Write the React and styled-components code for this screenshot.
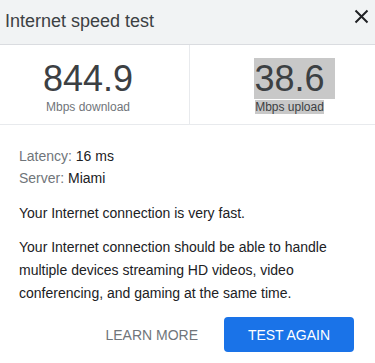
import React from "react";
import styled, { createGlobalStyle } from "styled-components";

const Global = createGlobalStyle`
  html, body { margin: 0; padding: 0; background: #fff; }
  body { font-family: "Liberation Sans", Arial, sans-serif; }
  * { box-sizing: border-box; }
`;

const Card = styled.div`
  width: 375px;
  height: 363px;
  background: #fff;
  display: flex;
  flex-direction: column;
  overflow: hidden;
`;

const Header = styled.div`
  height: 45px;
  background: #f1f3f4;
  border-bottom: 1px solid #dadce0;
  display: flex;
  align-items: center;
  justify-content: space-between;
  padding: 0 6px 1px 5px;
`;

const Title = styled.h1`
  margin: 0;
  font-size: 18px;
  font-weight: 400;
  color: #3c4043;
`;

const CloseButton = styled.button`
  border: 0;
  background: none;
  padding: 0;
  width: 15px;
  height: 15px;
  align-self: flex-start;
  margin-top: 9px;
  cursor: pointer;
  display: flex;
`;

const Stats = styled.div`
  display: grid;
  grid-template-columns: 190px 1fr;
  border-bottom: 1px solid #e8eaed;
  height: 80px;
`;

const Stat = styled.div`
  display: flex;
  flex-direction: column;
  align-items: center;
  padding-top: 13px;
  ${(p) =>
    p.$side === "left"
      ? "padding-right: 13px; border-right: 1px solid #e8eaed;"
      : "padding-left: 14px;"}
`;

const Number = styled.div`
  font-size: 36px;
  line-height: normal;
  color: #3c4043;
`;

const Label = styled.div`
  font-size: 12px;
  line-height: 14px;
  color: #70757a;
`;

const Selected = styled.span`
  background: #c8c8c8;
  color: #3c4043;
  padding-right: ${(p) => p.$trail || 0}px;
  margin-right: -${(p) => p.$trail || 0}px;
`;

const Body = styled.div`
  padding: 20px 19px 0;
  display: flex;
  flex-direction: column;
`;

const Meta = styled.div`
  font-size: 14px;
  line-height: 22px;
  color: #70757a;
`;

const Value = styled.span`
  color: #202124;
`;

const Para = styled.p`
  margin: ${(p) => p.$mt || 0}px 0 0;
  font-size: 14px;
  line-height: 23px;
  color: #202124;
`;

const Actions = styled.div`
  display: flex;
  justify-content: flex-end;
  align-items: center;
  gap: 26px;
  padding: 12px 2px 0 0;
`;

const TextButton = styled.button`
  border: 0;
  background: none;
  padding: 0;
  font-family: inherit;
  font-size: 14px;
  color: #70757a;
  cursor: pointer;
`;

const PrimaryButton = styled.button`
  border: 0;
  background: #1a73e8;
  color: #fff;
  width: 130px;
  height: 35px;
  border-radius: 4px;
  font-family: inherit;
  font-size: 14px;
  cursor: pointer;
`;

export default function App() {
  return (
    <>
      <Global />
      <Card>
        <Header>
          <Title>Internet speed test</Title>
          <CloseButton aria-label="Close">
            <svg width="15" height="15" viewBox="0 0 15 15">
              <path d="M1.5 1.5 L13.5 13.5 M13.5 1.5 L1.5 13.5" stroke="#202124" strokeWidth="2" fill="none" />
            </svg>
          </CloseButton>
        </Header>
        <Stats>
          <Stat $side="left">
            <Number>844.9</Number>
            <Label>Mbps download</Label>
          </Stat>
          <Stat $side="right">
            <Number>
              <Selected $trail={10}>38.6</Selected>
            </Number>
            <Label>
              <Selected>Mbps upload</Selected>
            </Label>
          </Stat>
        </Stats>
        <Body>
          <Meta>
            Latency: <Value>16 ms</Value>
          </Meta>
          <Meta>
            Server: <Value>Miami</Value>
          </Meta>
          <Para $mt={13}>Your Internet connection is very fast.</Para>
          <Para $mt={11}>
            Your Internet connection should be able to handle multiple devices
            streaming HD videos, video conferencing, and gaming at the same time.
          </Para>
          <Actions>
            <TextButton>LEARN MORE</TextButton>
            <PrimaryButton>TEST AGAIN</PrimaryButton>
          </Actions>
        </Body>
      </Card>
    </>
  );
}
